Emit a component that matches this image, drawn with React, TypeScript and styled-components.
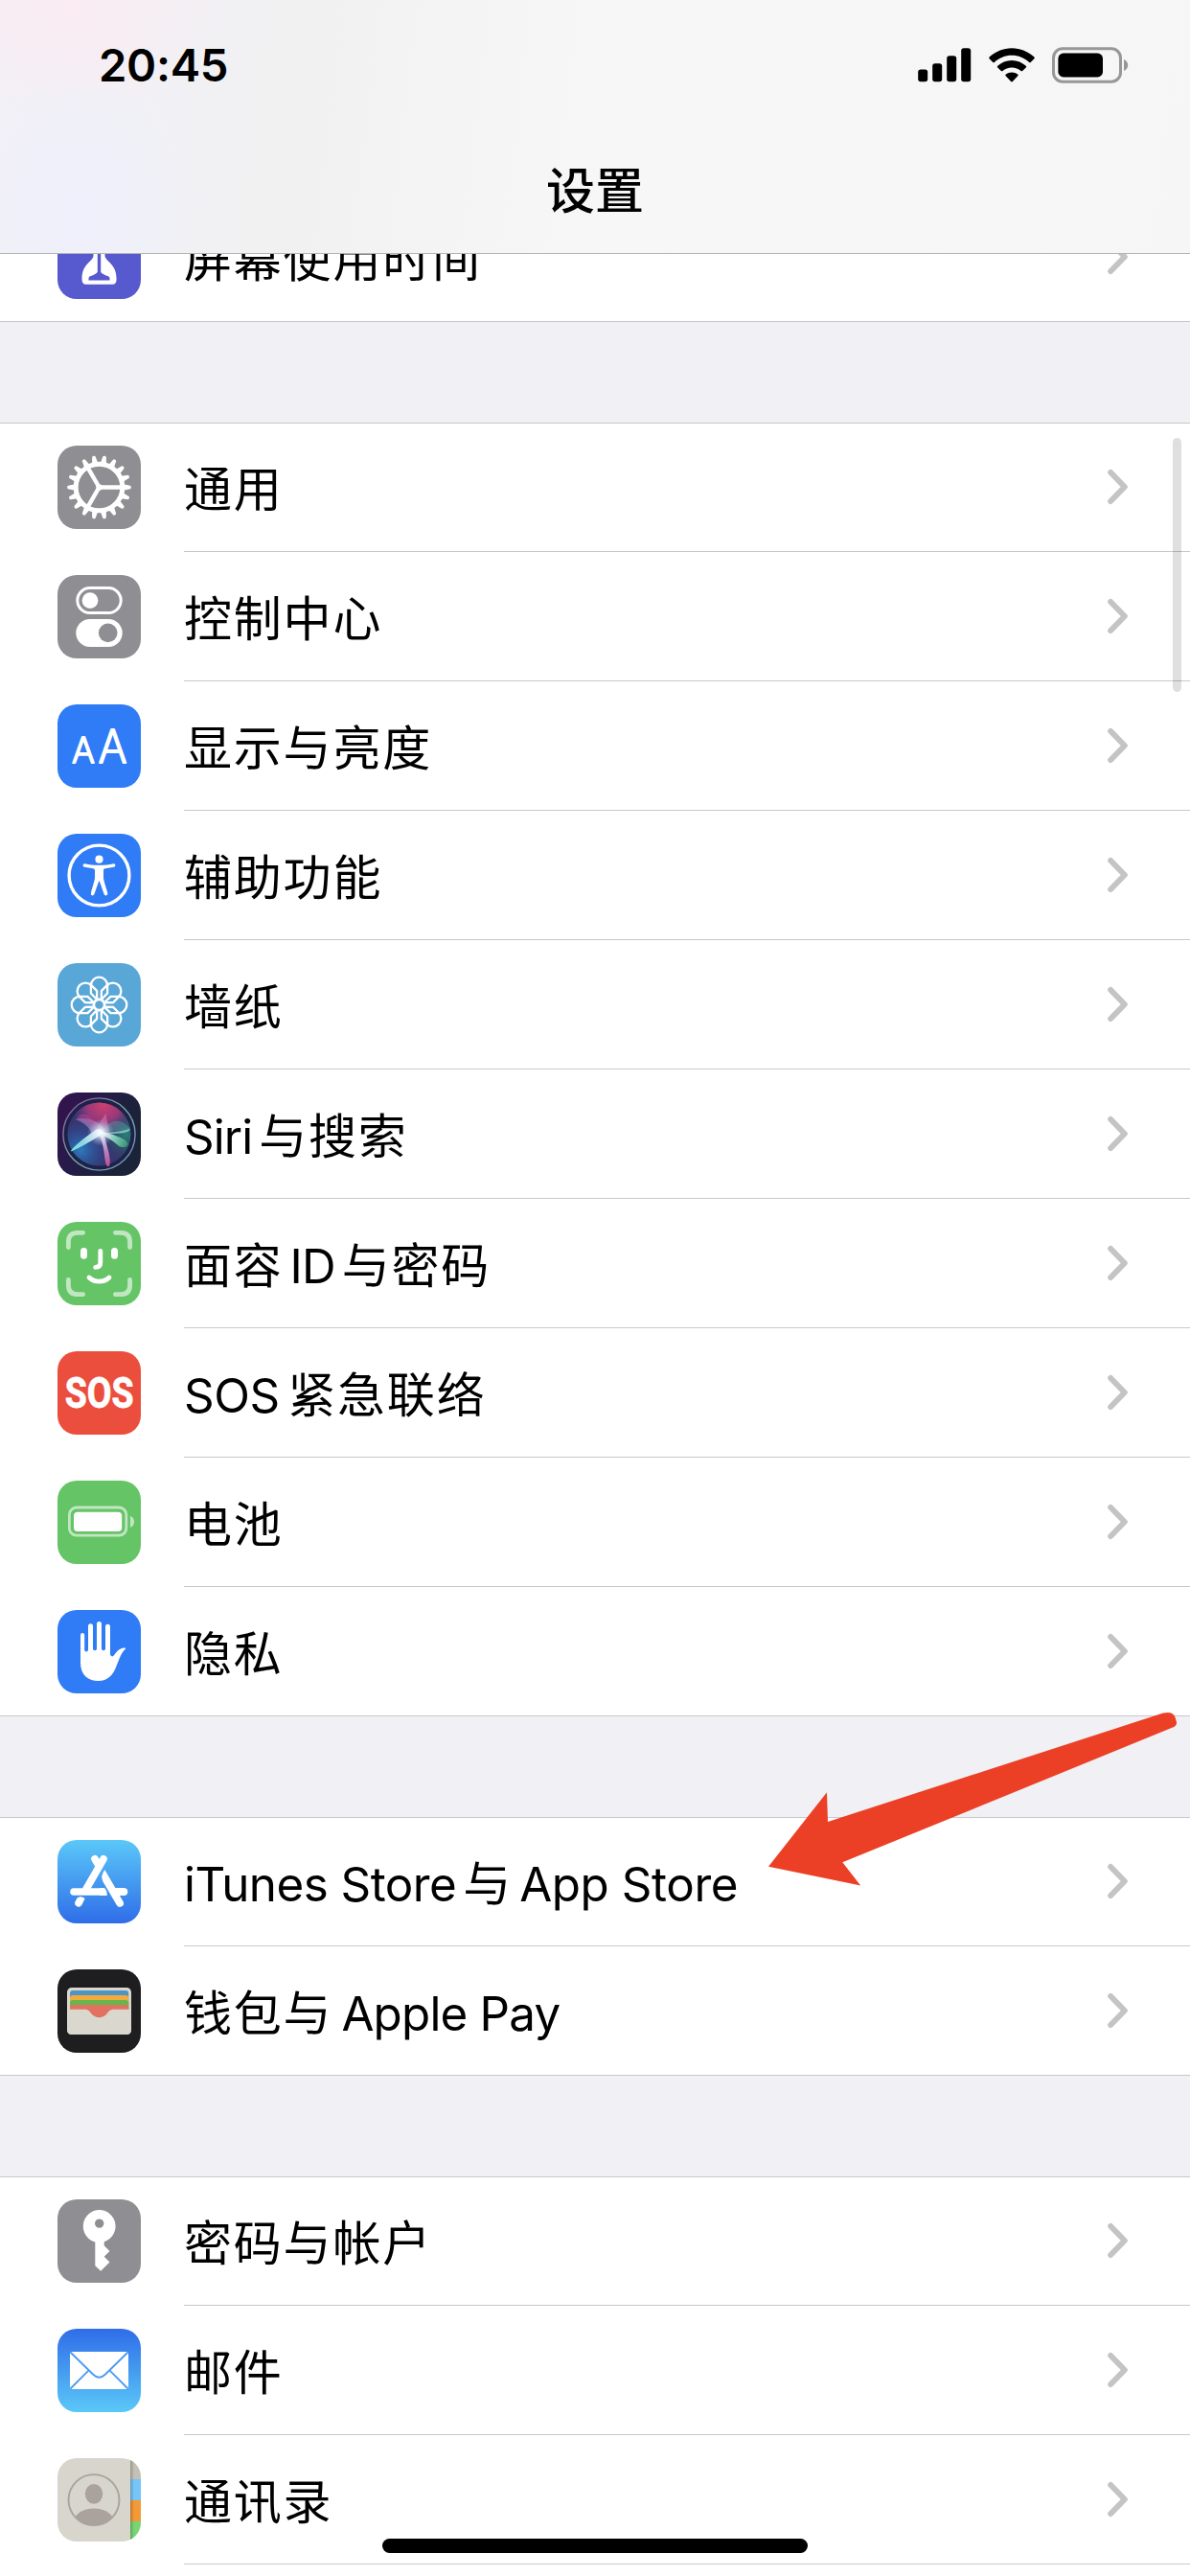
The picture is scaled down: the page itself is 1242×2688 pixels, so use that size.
import React from "react";
import styled, { createGlobalStyle } from "styled-components";

const GlobalStyle = createGlobalStyle`
  html, body { margin: 0; padding: 0; background: #fff; }
  * { box-sizing: border-box; }
`;

const latinStack = `Inter, "Liberation Sans", sans-serif`;
const cjkStack = `"Noto Sans CJK SC", sans-serif`;

const Screen = styled.div`
  position: relative;
  display: flex;
  flex-direction: column;
  width: 1242px;
  height: 2688px;
  overflow: hidden;
  background: #f0f0f5;
  color: #000;
  font-family: ${cjkStack};
`;

const Header = styled.header`
  position: relative;
  z-index: 1;
  flex: none;
  display: flex;
  flex-direction: column;
  height: 265px;
  border-bottom: 1px solid #b4b4b6;
  background:
    radial-gradient(ellipse 170px 110px at 75px 10px, rgba(251, 234, 240, 0.85), rgba(251, 234, 240, 0)),
    radial-gradient(ellipse 130px 170px at 80px 220px, rgba(238, 239, 252, 0.9), rgba(238, 239, 252, 0)),
    linear-gradient(97deg, #f3f1f7 0%, #f1f1f5 15%, #f1f1f1 26%, #f5f5f5 42%, #f7f7f7 52%, #f6f6f6 100%);
`;

const StatusBar = styled.div`
  display: flex;
  align-items: center;
  justify-content: space-between;
  height: 135px;
  padding: 0 64px 0 103px;
`;

const Clock = styled.span`
  font: 600 47.2px/60px ${latinStack};
  letter-spacing: -0.3px;
`;

const StatusIcons = styled.div`
  display: flex;
  align-items: center;
  gap: 18px;
`;

const Title = styled.h1`
  margin: 24px 0 0;
  text-align: center;
  font: 500 51px/74px ${cjkStack};
`;

const List = styled.main`
  flex: 1;
  display: flex;
  flex-direction: column;
  gap: 105px;
  min-height: 0;
  margin-top: -64px;
`;

const Group = styled.section`
  flex: none;
  background: #fff;
`;

const Row = styled.div<{ $first?: boolean; $last?: boolean }>`
  display: grid;
  grid-template-columns: 87px 1fr;
  column-gap: 45px;
  height: 135px;
  padding-left: 60px;
  background: linear-gradient(#c8c7cc, #c8c7cc) no-repeat
    ${(p) => (p.$last ? "0" : "192px")} 100% / 100% 1px;
  box-shadow: ${(p) => (p.$first ? "inset 0 1px 0 #c8c7cc" : "none")};
`;

const Tile = styled.div<{ $bg: string }>`
  width: 87px;
  height: 87px;
  margin-top: 24px;
  border-radius: 20px;
  overflow: hidden;
  background: ${(p) => p.$bg};
  svg { display: block; }
`;

const RowBody = styled.div`
  display: flex;
  align-items: center;
  justify-content: space-between;
  height: 134px;
  padding-right: 64px;
`;

const Label = styled.span`
  display: block;
  padding-bottom: 2px;
  font-size: 50px;
  line-height: 74px;
  letter-spacing: 1.8px;
  white-space: pre;
`;

const Latin = styled.span<{ $before?: number; $after?: number; $track?: number }>`
  font-family: ${latinStack};
  font-size: 49.3px;
  line-height: 0;
  letter-spacing: ${(p) => p.$track ?? -0.9}px;
  margin-left: ${(p) => p.$before ?? 0}px;
  margin-right: ${(p) => p.$after ?? 0}px;
`;

const ScrollThumb = styled.div`
  position: absolute;
  z-index: 2;
  top: 457px;
  right: 9px;
  width: 9px;
  height: 265px;
  border-radius: 5px;
  background: rgba(0, 0, 0, 0.125);
`;

const HomeIndicator = styled.div`
  position: absolute;
  left: 399px;
  bottom: 24px;
  width: 444px;
  height: 15px;
  border-radius: 8px;
  background: #000;
`;

const ArrowOverlay = styled.svg`
  position: absolute;
  z-index: 2;
  left: 802px;
  top: 1786px;
`;

const Chevron = () => (
  <svg width="22" height="38" viewBox="0 0 22 38" fill="none">
    <path d="M3.2 4L17.8 19L3.2 34" stroke="#c4c4c6" strokeWidth="6" strokeLinecap="round" strokeLinejoin="round" />
  </svg>
);

const Signal = () => (
  <svg width="56" height="36" viewBox="0 0 56 36">
    <rect x="0.2" y="22.5" width="10" height="12.8" rx="2.8" />
    <rect x="15.2" y="16.3" width="10" height="19" rx="2.8" />
    <rect x="30.2" y="8.3" width="10" height="27" rx="2.8" />
    <rect x="45.2" y="0.3" width="10" height="35" rx="2.8" />
  </svg>
);

const Wifi = () => (
  <svg width="48" height="36" viewBox="0 0 48 36">
    <path d="M24 0.2C33 0.2 41.3 3.8 47.4 9.6C47.9 10.1 47.9 10.8 47.4 11.3L43.7 15C43.2 15.4 42.6 15.4 42.1 15C37.3 10.5 31 7.8 24 7.8S10.7 10.5 5.9 15C5.4 15.4 4.8 15.4 4.3 15L0.6 11.3C0.1 10.8 0.1 10.1 0.6 9.6C6.7 3.8 15 0.2 24 0.2Z" />
    <path d="M24 12.9C29.7 12.9 34.9 15.1 38.8 18.7C39.3 19.2 39.3 19.9 38.8 20.4L35.1 24C34.7 24.4 34 24.4 33.5 24C31 21.8 27.7 20.4 24 20.4S17 21.8 14.5 24C14 24.4 13.3 24.4 12.9 24L9.2 20.4C8.7 19.9 8.7 19.2 9.2 18.7C13.1 15.1 18.3 12.9 24 12.9Z" />
    <path d="M24 25.4C26.3 25.4 28.5 26.2 30.2 27.6C30.8 28.1 30.8 28.8 30.3 29.3L24.9 35C24.4 35.5 23.6 35.5 23.1 35L17.7 29.3C17.2 28.8 17.2 28.1 17.8 27.6C19.5 26.2 21.7 25.4 24 25.4Z" />
  </svg>
);

const StatusBattery = () => (
  <svg width="80" height="38" viewBox="0 0 80 38">
    <rect x="1.5" y="1.8" width="70" height="34.4" rx="9.5" fill="none" stroke="#979797" strokeWidth="3" />
    <rect x="6.4" y="6.6" width="46.6" height="24.8" rx="5.5" />
    <path d="M75 13C77.6 14 79.2 16.4 79.2 19S77.6 24 75 25Z" fill="#979797" />
  </svg>
);

const Glyph = ({ children }: { children: React.ReactNode }) => (
  <svg width="87" height="87" viewBox="0 0 87 87" fill="none">{children}</svg>
);

const HourglassIcon = () => (
  <Glyph>
    <path d="M28 13H59Q62 13 61.5 18C60 27 50 30 49.5 39V42C50 48 61.6 50 61.6 66Q61.6 71.8 57.5 71.8H29.7Q25.5 71.8 25.5 66C25.5 50 37 48 37.5 42V39C37 30 27 27 25.5 18Q25 13 28 13Z" fill="#fff" />
    <path d="M43.5 36V60" stroke="#5759ce" strokeWidth="3.4" />
    <path d="M43.5 57Q46 61 53.5 63.5Q55 64.5 54.5 67.5H32.5Q32 64.5 33.5 63.5Q41 61 43.5 57Z" fill="#5759ce" />
  </Glyph>
);

const GearIcon = () => (
  <Glyph>
    <g transform="translate(43.5 43.5)">
      {Array.from({ length: 18 }, (_, i) => (
        <path key={i} transform={`rotate(${i * 20})`} d="M24 -3.4L32.4 -1.7Q33.3 -1.5 33.3 0T32.4 1.7L24 3.4Z" fill="#fff" />
      ))}
      <circle r="24.3" stroke="#fff" strokeWidth="5" />
      {[0, 120, 240].map((a) => (
        <path key={a} transform={`rotate(${a})`} d="M0 -2.2H23V2.2H0Z" fill="#fff" />
      ))}
      <circle r="3.2" fill="#fff" />
    </g>
  </Glyph>
);

const TogglesIcon = () => (
  <Glyph>
    <rect x="20.8" y="13.6" width="45.4" height="26" rx="13" stroke="#fff" strokeWidth="3" />
    <circle cx="34" cy="26.6" r="8.4" fill="#fff" />
    <rect x="19.3" y="46" width="48.4" height="29" rx="14.5" fill="#fff" />
    <circle cx="52.7" cy="60.4" r="9.8" fill="#8e8e93" />
  </Glyph>
);

const TextSizeIcon = () => (
  <Glyph>
    <g fill="#fff" stroke="#fff" strokeWidth="2.2" strokeLinejoin="round" fontFamily="Inter" fontWeight="200">
      <text x="15.2" y="60.7" fontSize="36.3" textLength="23.4" lengthAdjust="spacingAndGlyphs">A</text>
      <text x="42.8" y="60.7" fontSize="47.7" textLength="29.6" lengthAdjust="spacingAndGlyphs">A</text>
    </g>
  </Glyph>
);

const AccessibilityIcon = () => (
  <Glyph>
    <circle cx="43.5" cy="43.5" r="31.4" stroke="#fff" strokeWidth="3.4" />
    <circle cx="43.5" cy="26.7" r="4.1" fill="#fff" />
    <path d="M28.8 31.3C33 32.3 38 32.8 43.5 32.8S54 32.3 58.3 31.3C60.8 31 61.2 34.2 58.8 34.8L49.8 36.2C48.6 36.4 48 37 48 38.2V45.5C48 49 51.5 58 52.3 62C52.7 64.6 49.4 65.3 48.6 63L43.9 49.8Q43.5 48.8 43.1 49.8L38.4 63C37.6 65.3 34.3 64.6 34.9 62C35.5 58 39 49 39 45.5V38.2C39 37 38.4 36.4 37.2 36.2L28.2 34.8C25.8 34.2 26.2 31 28.8 31.3Z" fill="#fff" />
  </Glyph>
);

const FlowerIcon = () => (
  <Glyph>
    <g transform="translate(43.5 43.5)" stroke="#fff" strokeWidth="2.3" strokeLinejoin="round">
      {Array.from({ length: 8 }, (_, i) => (
        <path key={i} transform={`rotate(${i * 45})`} d="M-2 -5.2L-8.6 -12V-20.2A8.6 8.6 0 0 1 8.6 -20.2V-12L2 -5.2" />
      ))}
      <circle r="5.6" strokeWidth="2.6" />
    </g>
  </Glyph>
);

const SiriIcon = () => (
  <Glyph>
    <defs>
      <linearGradient id="siriRim" x1="0" y1="0" x2="1" y2="1">
        <stop offset="0" stopColor="#8b4b9c" />
        <stop offset="0.5" stopColor="#79aaa0" />
        <stop offset="1" stopColor="#6a8fb8" />
      </linearGradient>
      <radialGradient id="siriPink" cx="48" cy="12" r="33" gradientUnits="userSpaceOnUse">
        <stop offset="0" stopColor="#d0406f" />
        <stop offset="0.55" stopColor="#a8397a" stopOpacity="0.85" />
        <stop offset="1" stopColor="#5a3a80" stopOpacity="0" />
      </radialGradient>
      <radialGradient id="siriBlue" cx="24" cy="60" r="32" gradientUnits="userSpaceOnUse">
        <stop offset="0" stopColor="#2d7abf" />
        <stop offset="1" stopColor="#27519b" stopOpacity="0" />
      </radialGradient>
      <radialGradient id="siriTeal" cx="72" cy="44" r="27" gradientUnits="userSpaceOnUse">
        <stop offset="0" stopColor="#2b7f75" />
        <stop offset="1" stopColor="#22585f" stopOpacity="0" />
      </radialGradient>
      <radialGradient id="siriGlow" cx="45" cy="42" r="14" gradientUnits="userSpaceOnUse">
        <stop offset="0" stopColor="#fff" />
        <stop offset="0.3" stopColor="#e6f3fb" stopOpacity="0.75" />
        <stop offset="1" stopColor="#b5bde6" stopOpacity="0" />
      </radialGradient>
      <linearGradient id="siriBladeLeft" x1="44" y1="43" x2="14" y2="61" gradientUnits="userSpaceOnUse">
        <stop offset="0" stopColor="#fff" />
        <stop offset="0.6" stopColor="#8fe0ea" />
        <stop offset="1" stopColor="#7df0dc" />
      </linearGradient>
      <linearGradient id="siriBladeRight" x1="48" y1="43" x2="73" y2="53" gradientUnits="userSpaceOnUse">
        <stop offset="0" stopColor="#f2fffb" />
        <stop offset="0.45" stopColor="#8fdcc4" />
        <stop offset="1" stopColor="#3c9c78" />
      </linearGradient>
      <linearGradient id="siriBladeDown" x1="46" y1="45" x2="54" y2="77" gradientUnits="userSpaceOnUse">
        <stop offset="0" stopColor="#f1e4f8" />
        <stop offset="0.5" stopColor="#c68cc8" />
        <stop offset="1" stopColor="#d04f94" />
      </linearGradient>
    </defs>
    <circle cx="43.5" cy="43.5" r="37.6" fill="#1e2148" stroke="url(#siriRim)" strokeWidth="1.4" />
    <circle cx="43.5" cy="43.5" r="33" fill="#38346f" />
    <circle cx="43.5" cy="43.5" r="33" fill="url(#siriTeal)" />
    <circle cx="43.5" cy="43.5" r="33" fill="url(#siriBlue)" />
    <circle cx="43.5" cy="43.5" r="33" fill="url(#siriPink)" />
    <path d="M50.500 22C51.500 30 54 40 56 49L46 44L34 50C38 40 45 30 50.500 22Z" fill="#f08fc4" opacity="0.4" />
    <path d="M18 28C31 25 42 29 50 39L38 48C35 38 29 31 18 28Z" fill="#a9b4e0" opacity="0.45" />
    <path d="M20 27C25 17 38 24 46 42C36 36 29 30 20 27Z" fill="#c8479a" opacity="0.4" />
    <path d="M46 41C54 28 66 26 75 37C75 39 70 40 46 41Z" fill="#5fa0a8" opacity="0.4" />
    <path d="M46 43C56 41 68 41 75.500 37.500C76.500 40 73 42 66 42.500C58 43 52 44 46 43Z" fill="#8fd8d2" opacity="0.75" />
    <path d="M14 61.500C13.500 59.500 29 46 41 38.500C44 36.500 49 40 48 43C42 46 24 58 14 61.500Z" fill="url(#siriBladeLeft)" opacity="0.92" />
    <path d="M45 40C54 43 71 47 73.500 53C74 57.500 67 58.500 63 55C57 49.500 51 46 45 44Z" fill="url(#siriBladeRight)" opacity="0.88" />
    <path d="M43 43C45 42 48 42 49 44C50 53 56 66 54.600 75C54 78.500 51.500 77.500 50.500 74.500C48.500 66 49 55 43 43Z" fill="url(#siriBladeDown)" opacity="0.9" />
    <circle cx="45" cy="42" r="14" fill="url(#siriGlow)" />
  </Glyph>
);

const FaceIcon = () => (
  <Glyph>
    <g stroke="#fff" strokeWidth="4.8" strokeLinecap="round">
      <path opacity="0.6" d="M26.6 11.3H21Q11.4 11.3 11.4 21V26.6M60.4 11.3H66Q75.6 11.3 75.6 21V26.6M26.6 75.7H21Q11.4 75.7 11.4 66V60.4M60.4 75.7H66Q75.6 75.7 75.6 66V60.4" />
      <path d="M44.8 30.3V42.6Q44.8 47.3 39.6 47.4M33 58C38.5 63.6 48.5 63.6 54 58" />
    </g>
    <rect x="24" y="27" width="7" height="11.8" rx="3.5" fill="#fff" />
    <rect x="56" y="27" width="7" height="11.8" rx="3.5" fill="#fff" />
  </Glyph>
);

const SosIcon = () => (
  <Glyph>
    <text transform="translate(43.7 59.400) scale(0.83 1)" textAnchor="middle" fontFamily="Roboto" fontWeight="700" fontSize="45" fill="#fff" stroke="#fff" strokeWidth="0.8" strokeLinejoin="round">SOS</text>
  </Glyph>
);

const BatteryIcon = () => (
  <Glyph>
    <rect x="12.4" y="28" width="59.4" height="29.2" rx="7.5" stroke="#fff" strokeOpacity="0.6" strokeWidth="2.8" />
    <rect x="17" y="32.7" width="50.2" height="20.3" rx="4" fill="#fff" />
    <path d="M76 36.7C78.6 38 80 40.3 80 42.9S78.6 47.8 76 49Z" fill="#fff" fillOpacity="0.6" />
  </Glyph>
);

const HandIcon = () => (
  <Glyph>
    <path d="M24 26.2A2.1 2.1 0 0 1 28.2 26.2V42Q30 45 32 42V16.7A2.5 2.5 0 0 1 37 16.7V41Q39 43.4 41 41V14.5A2.5 2.5 0 0 1 46 14.5V41Q48 43.4 50 41V17.3A2.5 2.5 0 0 1 55 17.3V46.5Q57 50.3 59.3 46.8C62 42.8 66 38.6 71 39.6Q71.4 40.3 70.6 41C66.5 44.5 64.5 51.5 61.8 57.7C58 68 52.5 74 42.5 74C31.5 74 24 67.5 24 55Z" fill="#fff" />
  </Glyph>
);

const StoreIcon = () => (
  <Glyph>
    <g stroke="#fff" strokeWidth="7.6" strokeLinecap="round">
      <path d="M48 19.8L29.5 52M39 19.8L43 26.5M17 54H46" />
    </g>
    <path d="M44 50H49Q52 53 51.7 58H44Z" fill="#fff" />
    <path d="M49.3 31Q47.2 34 46.3 37.5Q45.8 40.5 47.5 43.4L61.8 68A3.9 3.9 0 0 0 68.6 64.2L64.9 57.9H70A3.95 3.95 0 0 0 70 50.1H60.4Z" fill="#fff" />
    <path d="M28.6 61.3L25.4 67.8A3.9 3.9 0 0 1 18.5 64.2L20.4 60.8Q22 58.6 25 59.3Q27.3 59.7 28.6 61.3Z" fill="#fff" />
  </Glyph>
);

const WalletIcon = () => (
  <Glyph>
    <rect x="10" y="19" width="67" height="49" rx="4.8" fill="#dad7ce" />
    <path d="M13 45V25Q13 22 16 22H71Q74.2 22 74.2 25V45Z" fill="#4e94c4" />
    <path d="M13 45V30Q13 27 16 27H71Q74.2 27 74.2 30V45Z" fill="#f3ac3c" />
    <path d="M13 45V35Q13 32 16 32H71Q74.2 32 74.2 35V45Z" fill="#68b44d" />
    <path d="M13 52V40Q13 37 16 37H71Q74.2 37 74.2 40V52Z" fill="#e37160" />
    <path d="M10 41.7H28C33 41.7 33.5 44 35.8 46.8C39.8 51.3 47.2 51.3 51.2 46.8C53.5 44 54 41.7 59 41.7H77V63.2Q77 68 72.2 68H14.8Q10 68 10 63.2Z" fill="#dad7ce" />
  </Glyph>
);

const KeyIcon = () => (
  <Glyph>
    <path fillRule="evenodd" d="M43.7 11A17 17 0 0 1 48.7 44.2V48.3L54.5 54L48.7 59.7L54.5 65.5L45.2 74.8L39.3 69.2V44.4A17 17 0 0 1 43.7 11ZM43.7 20.4A4.7 4.7 0 1 0 43.7 29.8A4.7 4.7 0 1 0 43.7 20.4Z" fill="#fff" />
  </Glyph>
);

const MailIcon = () => (
  <Glyph>
    <rect x="13" y="24" width="61" height="39" rx="2" fill="#fff" />
    <path d="M13.5 24.5L37 47.5Q43.5 54 50 47.5L73.5 24.5M13.5 62.5L32.4 43.6M73.5 62.5L54.6 43.6" stroke="#4b9bf3" strokeWidth="1.8" />
  </Glyph>
);

const ContactsIcon = () => (
  <Glyph>
    <defs>
      <clipPath id="contactDisc"><circle cx="38" cy="43.6" r="26.5" /></clipPath>
      <linearGradient id="tabShade" x1="0" x2="1">
        <stop offset="0" stopOpacity="0.22" />
        <stop offset="1" stopOpacity="0" />
      </linearGradient>
    </defs>
    <rect x="76" width="11" height="22" fill="#c3c0b6" />
    <rect x="76" y="22" width="11" height="22" fill="#77c5f6" />
    <rect x="76" y="44" width="11" height="22" fill="#f29a38" />
    <rect x="76" y="66" width="11" height="21" fill="#78d572" />
    <rect x="76" width="4" height="87" fill="url(#tabShade)" />
    <circle cx="38" cy="43.6" r="26.5" stroke="#aaa29d" strokeWidth="1.9" />
    <ellipse cx="38" cy="37.3" rx="9.2" ry="10.4" fill="#aaa29d" />
    <path clipPath="url(#contactDisc)" d="M17 64C21 56 29 52.6 38 52.6S55 56 59 64V74H17Z" fill="#aaa29d" />
  </Glyph>
);

type Item = { bg: string; icon: React.ReactNode; label: React.ReactNode };

const gray = "#8e8e93";
const blue = "#307bf6";
const green = "#65c466";

const groups: Item[][] = [
  [{ bg: "#5759ce", icon: <HourglassIcon />, label: "屏幕使用时间" }],
  [
    { bg: gray, icon: <GearIcon />, label: "通用" },
    { bg: gray, icon: <TogglesIcon />, label: "控制中心" },
    { bg: blue, icon: <TextSizeIcon />, label: "显示与亮度" },
    { bg: blue, icon: <AccessibilityIcon />, label: "辅助功能" },
    { bg: "#59a7d7", icon: <FlowerIcon />, label: "墙纸" },
    {
      bg: "linear-gradient(115deg, #35124f 0%, #251c48 40%, #1b2238 75%, #1b2438 100%)",
      icon: <SiriIcon />,
      label: <><Latin $after={7}>Siri</Latin>与搜索</>,
    },
    { bg: green, icon: <FaceIcon />, label: <>面容<Latin $before={7} $after={7}>ID</Latin>与密码</> },
    { bg: "#eb4e3d", icon: <SosIcon />, label: <><Latin $after={8.5} $track={-0.4}>SOS</Latin>紧急联络</> },
    { bg: green, icon: <BatteryIcon />, label: "电池" },
    { bg: blue, icon: <HandIcon />, label: "隐私" },
  ],
  [
    {
      bg: "linear-gradient(#5bc8f8, #2f6de8)",
      icon: <StoreIcon />,
      label: <><Latin $after={7} $track={-0.5}>iTunes Store</Latin>与<Latin $before={7} $track={-0.4}>App Store</Latin></>,
    },
    { bg: "#1e1e20", icon: <WalletIcon />, label: <>钱包与<Latin $before={9} $track={-0.8}>Apple Pay</Latin></> },
  ],
  [
    { bg: gray, icon: <KeyIcon />, label: "密码与帐户" },
    { bg: "linear-gradient(#2f6de8, #5bc8f8)", icon: <MailIcon />, label: "邮件" },
    { bg: "#d8d5cd", icon: <ContactsIcon />, label: "通讯录" },
  ],
];

export default function App() {
  return (
    <Screen>
      <GlobalStyle />
      <Header>
        <StatusBar>
          <Clock>20:45</Clock>
          <StatusIcons>
            <Signal />
            <Wifi />
            <StatusBattery />
          </StatusIcons>
        </StatusBar>
        <Title>设置</Title>
      </Header>
      <List>
        {groups.map((items, g) => (
          <Group key={g}>
            {items.map((item, i) => (
              <Row key={i} $first={i === 0} $last={i === items.length - 1 && g < groups.length - 1}>
                <Tile $bg={item.bg}>{item.icon}</Tile>
                <RowBody>
                  <Label>{item.label}</Label>
                  <Chevron />
                </RowBody>
              </Row>
            ))}
            {g === groups.length - 1 && <Row />}
          </Group>
        ))}
      </List>
      <ScrollThumb />
      <ArrowOverlay width="428" height="184" viewBox="802 1786 428 184">
        <path d="M802 1947.7L863 1870.3L864 1901L1214 1787.6Q1224 1785 1226.5 1792L1228 1797Q1228.500 1800.600 1224 1802.600L879.300 1943.300L898.200 1967.500Z" fill="#eb4026" />
      </ArrowOverlay>
      <HomeIndicator />
    </Screen>
  );
}
